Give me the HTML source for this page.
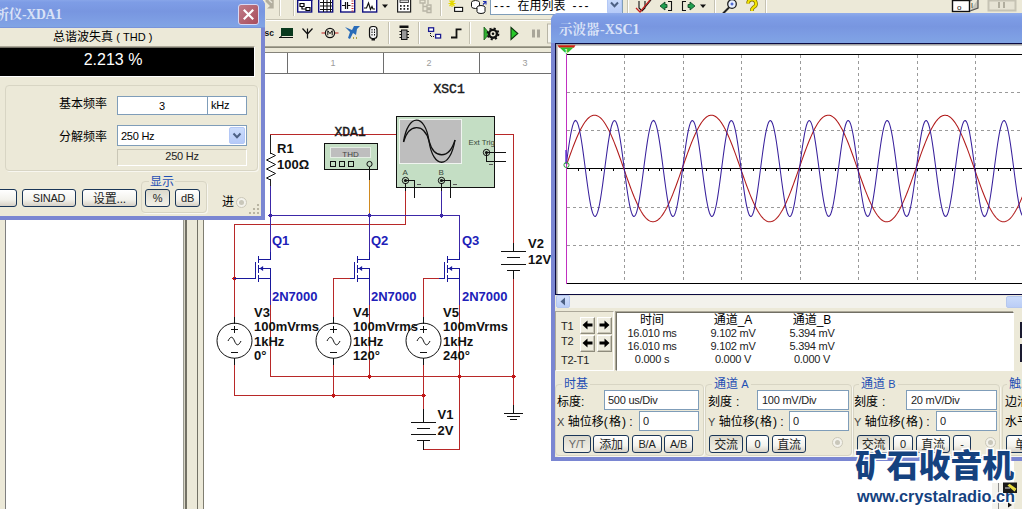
<!DOCTYPE html><html><head><meta charset="utf-8"><title>Multisim</title><style>*{box-sizing:border-box;margin:0;padding:0}
html,body{width:1022px;height:509px;overflow:hidden;background:#fff}
body{position:relative;font-family:"Liberation Sans","Noto Sans CJK SC",sans-serif;font-size:11px;color:#000}
.a{position:absolute}
.t{position:absolute;white-space:nowrap;line-height:1;letter-spacing:-0.25px}
.cj{font-family:"Liberation Sans","Noto Sans CJK SC",sans-serif;font-size:12px;letter-spacing:0}
.beige{background:#ECE9D8}
.btn{position:absolute;letter-spacing:-0.25px;color:#222;border:1px solid #1A3658;border-radius:3px;background:linear-gradient(#fff,#F3F2EC 60%,#D6D0C5);text-align:center;white-space:nowrap;overflow:hidden}
.btn.on{background:linear-gradient(#DCD9CC,#E8E6DC 50%,#F1EFE6)}
.inp{position:absolute;border:1px solid #7F9DB9;background:#fff;white-space:nowrap;overflow:hidden}
.grp{position:absolute;border:1px solid #D8D5C4;border-radius:4px;box-shadow:1px 1px 0 #F8F7F0}
.blue{color:#1F4FB4}
svg{position:absolute;overflow:visible}
</style></head><body>
<!-- sec_bg -->
<div class="a beige" style="left:0;top:0;width:1022px;height:53px"></div>
<div class="a" style="left:266px;top:19px;width:756px;height:1px;background:#C5C2B2"></div>
<div class="a" style="left:266px;top:20px;width:756px;height:1px;background:#fff"></div>
<div class="a" style="left:258px;top:46px;width:300px;height:1px;background:#A7A494"></div>
<div class="a" style="left:258px;top:47px;width:300px;height:1px;background:#8A8878"></div>
<div class="a" style="left:258px;top:52px;width:300px;height:1px;background:#85837A"></div>
<div class="a beige" style="left:0;top:200px;width:5px;height:309px"></div>
<div class="a" style="left:5px;top:200px;width:1px;height:309px;background:#7F7F7F"></div>
<div class="a beige" style="left:183px;top:200px;width:21px;height:309px"></div>
<div class="a" style="left:183px;top:200px;width:1px;height:309px;background:#9A9A90"></div>
<div class="a" style="left:184px;top:200px;width:1px;height:309px;background:#D8D5C5"></div>
<div class="a" style="left:185px;top:200px;width:2px;height:309px;background:#737165"></div>
<div class="a" style="left:197px;top:200px;width:1px;height:309px;background:#737165"></div>
<div class="a" style="left:203px;top:200px;width:1px;height:309px;background:#7F7D70"></div>
<div class="a" style="left:265px;top:73px;width:290px;height:1px;background:#6e6e6e"></div>
<div class="a" style="left:287px;top:53px;width:1px;height:20px;background:#6e6e6e"></div>
<div class="a" style="left:383px;top:53px;width:1px;height:20px;background:#6e6e6e"></div>
<div class="a" style="left:479px;top:53px;width:1px;height:20px;background:#6e6e6e"></div>
<div class="t" style="left:328px;top:58.7px;width:10px;text-align:center;font-size:9px;color:#9c9c9c">1</div>
<div class="t" style="left:424px;top:58.7px;width:10px;text-align:center;font-size:9px;color:#9c9c9c">2</div>
<div class="t" style="left:520px;top:58.7px;width:10px;text-align:center;font-size:9px;color:#9c9c9c">3</div>
<!-- sec_toolbar -->
<svg width="1022" height="53" viewBox="0 0 1022 53" style="left:0;top:0">
<rect x="279" y="0" width="1" height="16" fill="#C5C2B2"/><rect x="280" y="0" width="1" height="16" fill="#fff"/>
<rect x="293" y="0" width="1" height="16" fill="#C5C2B2"/><rect x="294" y="0" width="1" height="16" fill="#fff"/>
<rect x="440" y="0" width="1" height="16" fill="#C5C2B2"/><rect x="441" y="0" width="1" height="16" fill="#fff"/>
<rect x="627" y="0" width="1" height="16" fill="#C5C2B2"/><rect x="628" y="0" width="1" height="16" fill="#fff"/>
<rect x="714" y="0" width="1" height="16" fill="#C5C2B2"/><rect x="715" y="0" width="1" height="16" fill="#fff"/>
<rect x="765" y="0" width="1" height="16" fill="#C5C2B2"/><rect x="766" y="0" width="1" height="16" fill="#fff"/>
<path d="M265.5 0h8.2v8.4h-6.7l3 -2.4l-4.5 -4.5z" fill="#B2AE9E"/><path d="M269 0l3 2.800" stroke="#E8E6DA" stroke-width="1.4"/>
<rect x="297.7" y="-2" width="14" height="14" fill="#fff" stroke="#101080" stroke-width="1.4"/>
<rect x="318.7" y="-2" width="14" height="14" fill="#fff" stroke="#101080" stroke-width="1.4"/>
<rect x="340.7" y="-2" width="14" height="14" fill="#fff" stroke="#101080" stroke-width="1.4"/>
<rect x="362.7" y="-2" width="14" height="14" fill="#fff" stroke="#101080" stroke-width="1.4"/>
<rect x="297" y="-2" width="15.4" height="3" fill="#101080"/>
<path d="M300 3.5h4v3h-4zM306 7.5h4v3h-4zM302 6.5v2.5h4" fill="none" stroke="#000" stroke-width="1.2"/>
<path d="M320 2.5h12M320 6h12M320 9.5h12M323.5 0v12M327 0v12M330.5 0v12" stroke="#111" stroke-width="1"/>
<path d="M342 5.5h3M345.5 2v7M347.5 2v7M347.5 5.5h3" stroke="#111" stroke-width="1.2" fill="none"/><path d="M351.5 1h2M351.5 3.5h2M351.5 6h2M351.5 8.5h2M351.5 11h2" stroke="#C03030" stroke-width="1"/>
<path d="M364 8h2.5l2 -5l2 6.5l1.5 -3l1 2.5h2" stroke="#111" stroke-width="1.2" fill="none"/>
<path d="M382 4.5h6l-3 3.5z" fill="#111"/>
<rect x="397.6" y="-2" width="13" height="14" fill="#fff" stroke="#222" stroke-width="1.2"/><rect x="400" y="0" width="8.5" height="2.5" fill="#ddd" stroke="#222" stroke-width=".8"/>
<rect x="400" y="5" width="1.6" height="1.8" fill="#222"/>
<rect x="403.5" y="5" width="1.6" height="1.8" fill="#222"/>
<rect x="407" y="5" width="1.6" height="1.8" fill="#222"/>
<rect x="400" y="8" width="1.6" height="1.8" fill="#222"/>
<rect x="403.5" y="8" width="1.6" height="1.8" fill="#222"/>
<rect x="407" y="8" width="1.6" height="1.8" fill="#222"/>
<path d="M420 0h5v3h-5zM428 0v4M423 3v8h4M423 6.5h4M427 5h4v3h-4zM427 9.5h4v3h-4z" fill="none" stroke="#B8B5A6" stroke-width="1.3"/>
<path d="M452 -1v8M448.5 3.5h7M449.5 0.5l5 5.5M454.5 0.5l-5 5.5" stroke="#E4D800" stroke-width="1.2"/><rect x="454.6" y="7.4" width="8" height="4" fill="#fff" stroke="#111" stroke-width="1.1"/>
<ellipse cx="475.5" cy="2.5" rx="4" ry="2" fill="#fff" stroke="#111"/><path d="M471.5 2.5v4a4 2 0 0 0 8 0v-4" fill="#fff" stroke="#111"/>
<ellipse cx="481" cy="7.5" rx="4" ry="2" fill="#fff" stroke="#111"/><path d="M477 7.5v4a4 2 0 0 0 8 0v-4" fill="#fff" stroke="#111"/><path d="M483 1.5h3v3M486 1.5l-3 3" stroke="#2030B0" stroke-width="1.1" fill="none"/>
<path d="M639 1v7l3 3l3 -3v-7M642 11l9 -11" fill="none" stroke="#111" stroke-width="1.1"/><path d="M636 8l4 4l10 -12" fill="none" stroke="#C02020" stroke-width="1.3"/>
<path d="M660 6l5 -4v2.5h2v3h-2v2.5z" fill="#20A050" stroke="#0A4020" stroke-width=".8"/><path d="M668 1.5h3.5v9h-3.5" fill="none" stroke="#111" stroke-width="1.1"/>
<path d="M695 6l-5 -4v2.5h-2v3h2v2.5z" fill="#20A050" stroke="#0A4020" stroke-width=".8"/><path d="M686 1.5h-3.5v9h3.5" fill="none" stroke="#111" stroke-width="1.1"/>
<path d="M700 4.5h6l-3 3.5z" fill="#111"/>
<circle cx="732" cy="4" r="4.3" fill="#E8F0FF" stroke="#222" stroke-width="1.3"/><path d="M729 7.5l-6 6" stroke="#222" stroke-width="2"/><path d="M730.5 4h3M732 2.5v3" stroke="#2040C0" stroke-width="1"/>
<path d="M748 3.5a4 4 0 1 1 5.5 3.8l-1.5 1.8v2" fill="none" stroke="#8A7A00" stroke-width="3.6"/><path d="M748 3.5a4 4 0 1 1 5.5 3.8l-1.5 1.8v2" fill="none" stroke="#F4E400" stroke-width="2"/>
<rect x="952.5" y="0.5" width="17" height="11" fill="#fff" stroke="#111" stroke-width="1.4"/><text x="957" y="9.5" font-size="8" font-family="Liberation Sans, sans-serif" fill="#111">o</text><path d="M970 11l8 -3v-9M970 1l3 -2" stroke="#555" stroke-width="1.2" fill="#C8C5B8"/><text x="971" y="8" font-size="7" font-family="Liberation Sans, sans-serif" fill="#111">I</text>
<rect x="988.5" y="0.5" width="27" height="10" fill="#E6E3D4" stroke="#C6C3B4" stroke-width="2"/><rect x="998" y="2" width="2" height="6" fill="#B0AD9E"/><rect x="1003" y="2" width="2" height="6" fill="#B0AD9E"/>
<rect x="388" y="22" width="1" height="22" fill="#C5C2B2"/><rect x="389" y="22" width="1" height="22" fill="#fff"/>
<rect x="418" y="22" width="1" height="22" fill="#C5C2B2"/><rect x="419" y="22" width="1" height="22" fill="#fff"/>
<rect x="469" y="22" width="1" height="22" fill="#C5C2B2"/><rect x="470" y="22" width="1" height="22" fill="#fff"/>
<text x="264.5" y="35.5" font-size="8.5" font-weight="bold" font-family="Liberation Sans, sans-serif" fill="#111">sc</text>
<rect x="281" y="28" width="12" height="8" fill="#0A3A1E"/><path d="M279 37.5h14M281 36v1.5" stroke="#111" stroke-width="1.2"/>
<path d="M307.5 28.5v10M302.5 28.5l5 5.5l5 -5.5" fill="none" stroke="#111" stroke-width="1.2"/>
<path d="M321.5 33h4M334.5 33h4" stroke="#C02020" stroke-width="1.2"/><circle cx="330" cy="33" r="4.6" fill="none" stroke="#111" stroke-width="1.2"/><path d="M327.8 35.3v-4.6l2.2 3l2.2 -3v4.6" fill="none" stroke="#111" stroke-width="1"/>
<path d="M345 27l7 3l2 -4l6 0l-3 3l-1 6l-3 -2l-3 6l-2 -1l2 -6z" fill="#2A6CB8"/><path d="M353.5 37v2M356.5 37v2" stroke="#B0A040" stroke-width="1"/>
<rect x="369.5" y="26.5" width="7.5" height="12" rx="3" fill="#F4F4F4" stroke="#111" stroke-width="1.2"/><path d="M372 29v7M374.5 29v7" stroke="#111" stroke-width="1" stroke-dasharray="1.5 1"/><rect x="371.5" y="38.5" width="3.5" height="2" fill="#111"/>
<rect x="399.5" y="25.5" width="9" height="2.5" fill="#111"/><rect x="401.5" y="30" width="5.5" height="9.5" fill="#999" stroke="#111"/><path d="M399.5 31.5h2M399.5 34.5h2M399.5 37.5h2M407 31.5h2M407 34.5h2M407 37.5h2" stroke="#111" stroke-width="1.2"/>
<rect x="428.6" y="27.8" width="5" height="3.6" fill="#fff" stroke="#1A1A90" stroke-width="1.3"/><rect x="435.6" y="34.4" width="5" height="3.6" fill="#fff" stroke="#1A1A90" stroke-width="1.3"/><path d="M430.5 33v3.5h4" fill="none" stroke="#111" stroke-width="1" stroke-dasharray="1 1"/>
<path d="M451 37.5h5.5v-8.2h5" fill="none" stroke="#111" stroke-width="1.8"/>
<path d="M484 27l5.5 6.5l-5.5 6.5z" fill="#30B030" stroke="#1A5A1A" stroke-width=".8"/><circle cx="493" cy="33.8" r="3.9" fill="none" stroke="#111" stroke-width="2.4"/><circle cx="493" cy="33.8" r="5.5" fill="none" stroke="#111" stroke-width="1.8" stroke-dasharray="2.1 2.22"/><circle cx="493" cy="33.8" r="1.3" fill="#111"/>
<path d="M511 27.5l6.8 6l-6.8 6z" fill="#28C828" stroke="#103810" stroke-width="1.1"/>
<rect x="532" y="29.5" width="3" height="8" fill="#A9A699"/><rect x="537" y="29.5" width="3" height="8" fill="#A9A699"/>
<rect x="547.5" y="24" width="8" height="19" fill="#F6F5EE" stroke="#B8B5A6"/>
</svg>
<div class="inp" style="left:490px;top:-4px;width:133px;height:19px"></div>
<div class="t cj" style="left:494px;top:-0.5px;font-size:12px;letter-spacing:2px">---</div>
<div class="t cj" style="left:517.5px;top:-0.5px;font-size:12px">在用列表</div>
<div class="t cj" style="left:572.5px;top:-0.5px;font-size:12px;letter-spacing:2px">---</div>
<div class="a" style="left:607px;top:-3px;width:15px;height:17px;border-radius:0 0 2px 2px;border:1px solid #B4C8F6;background:linear-gradient(#CBDCFC,#B6CAF8)"></div>
<svg width="15" height="14" style="left:607px;top:0"><path d="M4 2.5l3.5 3.8l3.5 -3.8" stroke="#4D6185" stroke-width="2" fill="none"/></svg>
<!-- sec_schem -->
<svg width="1022" height="509" viewBox="0 0 1022 509" style="left:0;top:0" shape-rendering="crispEdges">
<rect x="270" y="134" width="244" height="1" fill="#B82828"/>
<rect x="513" y="134" width="1" height="110" fill="#B82828"/>
<rect x="513" y="278" width="1" height="135" fill="#B82828"/>
<rect x="234" y="224" width="172" height="1" fill="#B82828"/>
<rect x="405" y="190" width="1" height="35" fill="#B82828"/>
<rect x="234" y="224" width="1" height="94" fill="#B82828"/>
<rect x="333" y="278" width="1" height="40" fill="#B82828"/>
<rect x="333" y="278" width="17" height="1" fill="#B82828"/>
<rect x="423" y="278" width="1" height="40" fill="#B82828"/>
<rect x="423" y="278" width="16" height="1" fill="#B82828"/>
<rect x="270" y="376" width="244" height="1" fill="#B82828"/>
<rect x="270" y="304" width="1" height="73" fill="#B82828"/>
<rect x="369" y="304" width="1" height="73" fill="#B82828"/>
<rect x="459" y="304" width="1" height="146" fill="#B82828"/>
<rect x="234" y="395" width="190" height="1" fill="#B82828"/>
<rect x="234" y="364" width="1" height="32" fill="#B82828"/>
<rect x="333" y="364" width="1" height="32" fill="#B82828"/>
<rect x="423" y="364" width="1" height="46" fill="#B82828"/>
<rect x="423" y="449" width="37" height="1" fill="#B82828"/>
<rect x="270" y="185" width="1" height="68" fill="#3C28A8"/>
<rect x="270" y="215" width="190" height="1" fill="#3C28A8"/>
<rect x="459" y="215" width="1" height="38" fill="#3C28A8"/>
<rect x="369" y="215" width="1" height="38" fill="#3C28A8"/>
<rect x="441" y="190" width="1" height="26" fill="#3C28A8"/>
<rect x="369" y="179" width="1" height="36" fill="#D08A20"/>
<path d="M267.9 215.5l2.6 -2.6l2.6 2.6l-2.6 2.6z" fill="#3C28A8"/>
<path d="M366.9 215.5l2.6 -2.6l2.6 2.6l-2.6 2.6z" fill="#3C28A8"/>
<path d="M438.9 215.5l2.6 -2.6l2.6 2.6l-2.6 2.6z" fill="#3C28A8"/>
<path d="M231.9 278.5l2.6 -2.6l2.6 2.6l-2.6 2.6z" fill="#C01818"/>
<path d="M366.9 376.5l2.6 -2.6l2.6 2.6l-2.6 2.6z" fill="#C01818"/>
<path d="M456.9 376.5l2.6 -2.6l2.6 2.6l-2.6 2.6z" fill="#C01818"/>
<path d="M510.9 376.5l2.6 -2.6l2.6 2.6l-2.6 2.6z" fill="#C01818"/>
<path d="M330.9 395.5l2.6 -2.6l2.6 2.6l-2.6 2.6z" fill="#C01818"/>
<path d="M420.9 395.5l2.6 -2.6l2.6 2.6l-2.6 2.6z" fill="#C01818"/>
<rect x="270" y="135" width="1" height="19" fill="#222"/>
<polyline points="270.5,153 275.5,155.5 266.5,160 275.5,164.5 266.5,169 275.5,173.5 266.5,178 270.5,180" fill="none" stroke="#111" stroke-width="1" shape-rendering="auto"/>
<rect x="270" y="179" width="1" height="7" fill="#222"/>
<text x="277" y="153" fill="#111" font-size="13" font-family="Liberation Sans, sans-serif" font-weight="bold" >R1</text>
<text x="277" y="169" fill="#111" font-size="13" font-family="Liberation Sans, sans-serif" font-weight="bold" >100Ω</text>
<rect x="270" y="252" width="1" height="8" fill="#18189C"/>
<rect x="258" y="259" width="13" height="1" fill="#18189C"/>
<rect x="258" y="256" width="1" height="7" fill="#18189C"/>
<rect x="258" y="265" width="1" height="8" fill="#18189C"/>
<rect x="258" y="275" width="1" height="7" fill="#18189C"/>
<rect x="255" y="262" width="1" height="17" fill="#18189C"/>
<rect x="234" y="278" width="22" height="1" fill="#18189C"/>
<rect x="258" y="268" width="13" height="1" fill="#18189C"/>
<rect x="270" y="268" width="1" height="23" fill="#18189C"/>
<rect x="270" y="290" width="1" height="15" fill="#3C28A8"/>
<rect x="258" y="278" width="13" height="1" fill="#18189C"/>
<path d="M259.5 268.5l3.6 -2.6v5.2z" fill="#18189C" shape-rendering="auto"/>
<rect x="369" y="252" width="1" height="8" fill="#18189C"/>
<rect x="357" y="259" width="13" height="1" fill="#18189C"/>
<rect x="357" y="256" width="1" height="7" fill="#18189C"/>
<rect x="357" y="265" width="1" height="8" fill="#18189C"/>
<rect x="357" y="275" width="1" height="7" fill="#18189C"/>
<rect x="354" y="262" width="1" height="17" fill="#18189C"/>
<rect x="350" y="278" width="5" height="1" fill="#18189C"/>
<rect x="357" y="268" width="13" height="1" fill="#18189C"/>
<rect x="369" y="268" width="1" height="23" fill="#18189C"/>
<rect x="369" y="290" width="1" height="15" fill="#3C28A8"/>
<rect x="357" y="278" width="13" height="1" fill="#18189C"/>
<path d="M358.5 268.5l3.6 -2.6v5.2z" fill="#18189C" shape-rendering="auto"/>
<rect x="459" y="252" width="1" height="8" fill="#18189C"/>
<rect x="447" y="259" width="13" height="1" fill="#18189C"/>
<rect x="447" y="256" width="1" height="7" fill="#18189C"/>
<rect x="447" y="265" width="1" height="8" fill="#18189C"/>
<rect x="447" y="275" width="1" height="7" fill="#18189C"/>
<rect x="444" y="262" width="1" height="17" fill="#18189C"/>
<rect x="439" y="278" width="6" height="1" fill="#18189C"/>
<rect x="447" y="268" width="13" height="1" fill="#18189C"/>
<rect x="459" y="268" width="1" height="23" fill="#18189C"/>
<rect x="459" y="290" width="1" height="15" fill="#3C28A8"/>
<rect x="447" y="278" width="13" height="1" fill="#18189C"/>
<path d="M448.5 268.5l3.6 -2.6v5.2z" fill="#18189C" shape-rendering="auto"/>
<text x="272" y="245.3" fill="#2020B8" font-size="13" font-family="Liberation Sans, sans-serif" font-weight="bold" >Q1</text>
<text x="272" y="301" fill="#2020B8" font-size="13" font-family="Liberation Sans, sans-serif" font-weight="bold" >2N7000</text>
<text x="371" y="245.3" fill="#2020B8" font-size="13" font-family="Liberation Sans, sans-serif" font-weight="bold" >Q2</text>
<text x="371" y="301" fill="#2020B8" font-size="13" font-family="Liberation Sans, sans-serif" font-weight="bold" >2N7000</text>
<text x="462" y="245.3" fill="#2020B8" font-size="13" font-family="Liberation Sans, sans-serif" font-weight="bold" >Q3</text>
<text x="462" y="301" fill="#2020B8" font-size="13" font-family="Liberation Sans, sans-serif" font-weight="bold" >2N7000</text>
<circle cx="234.5" cy="340.7" r="17.5" fill="none" stroke="#111" stroke-width="1" shape-rendering="auto"/>
<rect x="234" y="317" width="1" height="7" fill="#111"/>
<rect x="234" y="358" width="1" height="7" fill="#111"/>
<rect x="231" y="329" width="7" height="1" fill="#111"/>
<rect x="234" y="326" width="1" height="7" fill="#111"/>
<rect x="231" y="352" width="7" height="1" fill="#111"/>
<path d="M228 341c2.5 -5 4.5 -5 6.5 0s4 5 6.5 0" fill="none" stroke="#111" stroke-width="1" shape-rendering="auto"/>
<text x="254" y="317" fill="#111" font-size="13" font-family="Liberation Sans, sans-serif" font-weight="bold" >V3</text>
<text x="254" y="331" fill="#111" font-size="13" font-family="Liberation Sans, sans-serif" font-weight="bold" >100mVrms</text>
<text x="254" y="345.5" fill="#111" font-size="13" font-family="Liberation Sans, sans-serif" font-weight="bold" >1kHz</text>
<text x="254" y="360" fill="#111" font-size="13" font-family="Liberation Sans, sans-serif" font-weight="bold" >0°</text>
<circle cx="333.5" cy="340.7" r="17.5" fill="none" stroke="#111" stroke-width="1" shape-rendering="auto"/>
<rect x="333" y="317" width="1" height="7" fill="#111"/>
<rect x="333" y="358" width="1" height="7" fill="#111"/>
<rect x="330" y="329" width="7" height="1" fill="#111"/>
<rect x="333" y="326" width="1" height="7" fill="#111"/>
<rect x="330" y="352" width="7" height="1" fill="#111"/>
<path d="M327 341c2.5 -5 4.5 -5 6.5 0s4 5 6.5 0" fill="none" stroke="#111" stroke-width="1" shape-rendering="auto"/>
<text x="353" y="317" fill="#111" font-size="13" font-family="Liberation Sans, sans-serif" font-weight="bold" >V4</text>
<text x="353" y="331" fill="#111" font-size="13" font-family="Liberation Sans, sans-serif" font-weight="bold" >100mVrms</text>
<text x="353" y="345.5" fill="#111" font-size="13" font-family="Liberation Sans, sans-serif" font-weight="bold" >1kHz</text>
<text x="353" y="360" fill="#111" font-size="13" font-family="Liberation Sans, sans-serif" font-weight="bold" >120°</text>
<circle cx="423.5" cy="340.7" r="17.5" fill="none" stroke="#111" stroke-width="1" shape-rendering="auto"/>
<rect x="423" y="317" width="1" height="7" fill="#111"/>
<rect x="423" y="358" width="1" height="7" fill="#111"/>
<rect x="420" y="329" width="7" height="1" fill="#111"/>
<rect x="423" y="326" width="1" height="7" fill="#111"/>
<rect x="420" y="352" width="7" height="1" fill="#111"/>
<path d="M417 341c2.5 -5 4.5 -5 6.5 0s4 5 6.5 0" fill="none" stroke="#111" stroke-width="1" shape-rendering="auto"/>
<text x="443" y="317" fill="#111" font-size="13" font-family="Liberation Sans, sans-serif" font-weight="bold" >V5</text>
<text x="443" y="331" fill="#111" font-size="13" font-family="Liberation Sans, sans-serif" font-weight="bold" >100mVrms</text>
<text x="443" y="345.5" fill="#111" font-size="13" font-family="Liberation Sans, sans-serif" font-weight="bold" >1kHz</text>
<text x="443" y="360" fill="#111" font-size="13" font-family="Liberation Sans, sans-serif" font-weight="bold" >240°</text>
<rect x="513" y="243" width="1" height="9" fill="#111"/>
<rect x="501" y="251" width="25" height="1" fill="#111"/>
<rect x="507" y="257" width="13" height="1" fill="#111"/>
<rect x="501" y="264" width="25" height="1" fill="#111"/>
<rect x="507" y="270" width="13" height="1" fill="#111"/>
<rect x="513" y="270" width="1" height="9" fill="#111"/>
<text x="528" y="248" fill="#111" font-size="13" font-family="Liberation Sans, sans-serif" font-weight="bold" >V2</text>
<text x="528" y="264.3" fill="#111" font-size="13" font-family="Liberation Sans, sans-serif" font-weight="bold" >12V</text>
<rect x="423" y="409" width="1" height="14" fill="#111"/>
<rect x="411" y="422" width="25" height="1" fill="#111"/>
<rect x="417" y="428" width="13" height="1" fill="#111"/>
<rect x="411" y="434" width="25" height="1" fill="#111"/>
<rect x="417" y="440" width="13" height="1" fill="#111"/>
<rect x="423" y="440" width="1" height="10" fill="#111"/>
<text x="437.5" y="419.2" fill="#111" font-size="13" font-family="Liberation Sans, sans-serif" font-weight="bold" >V1</text>
<text x="437.5" y="435" fill="#111" font-size="13" font-family="Liberation Sans, sans-serif" font-weight="bold" >2V</text>
<rect x="513" y="405" width="1" height="9" fill="#111"/>
<rect x="504" y="413" width="19" height="1" fill="#111"/>
<rect x="507" y="416" width="13" height="1" fill="#111"/>
<rect x="510" y="419" width="7" height="1" fill="#111"/>
<text x="334.5" y="135.6" fill="#1a1a1a" font-size="13" font-family="Liberation Mono, sans-serif" font-weight="normal" stroke="#1a1a1a" stroke-width="0.45">XDA1</text>
<rect x="324.5" y="143.5" width="53" height="26" fill="#C4DEC4" stroke="#111"/>
<rect x="330.5" y="147.5" width="40" height="10" fill="#BEBEBE" stroke="#E4EEE4"/>
<text x="350.5" y="156.6" fill="#444" font-size="8" font-family="Liberation Sans, sans-serif" font-weight="normal" text-anchor="middle">THD</text>
<rect x="330.5" y="161.5" width="5" height="5" fill="#C4DEC4" stroke="#111"/>
<rect x="339.5" y="161.5" width="5" height="5" fill="#C4DEC4" stroke="#111"/>
<rect x="348.5" y="161.5" width="5" height="5" fill="#C4DEC4" stroke="#111"/>
<circle cx="369.5" cy="164" r="2.6" fill="#C4DEC4" stroke="#111" shape-rendering="auto"/>
<rect x="369" y="167" width="1" height="13" fill="#111"/>
<text x="433.5" y="93.4" fill="#1a1a1a" font-size="13" font-family="Liberation Mono, sans-serif" font-weight="normal" stroke="#1a1a1a" stroke-width="0.45">XSC1</text>
<rect x="396.5" y="116.5" width="98" height="71" fill="#C4DEC4" stroke="#111"/>
<rect x="399.5" y="119.5" width="62" height="44" fill="#BEBEBE" stroke="#F0F4F0"/>
<path d="M403.5 142C408 113 425 113 429 141S450 170 455 140" fill="none" stroke="#111" stroke-width="1.3" shape-rendering="auto"/>
<path d="M403.5 142C409 123 424 123 429 141S449 160 455 140" fill="none" stroke="#111" stroke-width="1.3" shape-rendering="auto"/>
<text x="468.5" y="144.5" fill="#3a4a3a" font-size="7.8" font-family="Liberation Sans, sans-serif" font-weight="normal" >Ext Trig</text>
<text x="402.5" y="175" fill="#3a4a3a" font-size="8" font-family="Liberation Sans, sans-serif" font-weight="normal" >A</text>
<text x="438.5" y="175" fill="#3a4a3a" font-size="8" font-family="Liberation Sans, sans-serif" font-weight="normal" >B</text>
<circle cx="405.5" cy="180.5" r="3.2" fill="#C4DEC4" stroke="#111" shape-rendering="auto"/>
<circle cx="405.5" cy="180.5" r="1.6" fill="#111" shape-rendering="auto"/>
<circle cx="441.5" cy="180.5" r="3.2" fill="#C4DEC4" stroke="#111" shape-rendering="auto"/>
<circle cx="441.5" cy="180.5" r="1.6" fill="#111" shape-rendering="auto"/>
<circle cx="486.5" cy="152.5" r="3.2" fill="#C4DEC4" stroke="#111" shape-rendering="auto"/>
<circle cx="486.5" cy="152.5" r="1.6" fill="#111" shape-rendering="auto"/>
<rect x="405" y="180" width="10" height="1" fill="#111"/>
<rect x="414" y="180" width="1" height="18" fill="#111"/>
<rect x="405" y="183" width="1" height="8" fill="#111"/>
<rect x="417" y="184" width="4" height="1" fill="#555"/>
<rect x="441" y="180" width="10" height="1" fill="#111"/>
<rect x="450" y="180" width="1" height="18" fill="#111"/>
<rect x="441" y="183" width="1" height="8" fill="#111"/>
<rect x="453" y="184" width="4" height="1" fill="#555"/>
<rect x="486" y="152" width="20" height="1" fill="#111"/>
<rect x="486" y="152" width="1" height="10" fill="#111"/>
<rect x="486" y="161" width="20" height="1" fill="#111"/>
<rect x="489" y="164" width="4" height="1" fill="#555"/>
</svg>
<!-- sec_xda -->
<div class="a" style="left:-10px;top:-2px;width:275px;height:222px;background:#7A86D2;border-radius:0 8px 0 0"></div>
<div class="a beige" style="left:-10px;top:27px;width:271px;height:189px"></div>
<div class="a" style="left:-10px;top:-2px;width:275px;height:30px;border-radius:0 8px 0 0;background:linear-gradient(#90ACEB 0,#7E9DE6 14%,#7896E0 45%,#7E9FE4 80%,#80A4E4 96%,#7388D4 100%)"></div>
<div class="t" style="left:-4.5px;top:7.3px;font-size:13.5px;font-weight:bold;color:#D9E2F7;font-family:'Liberation Serif','Noto Serif CJK SC',serif">析仪<span style="display:inline-block;font-size:15.5px;line-height:13.5px;transform:scaleX(.88);transform-origin:0 50%">-XDA1</span></div>
<div class="a" style="left:238px;top:4px;width:21px;height:21px;border:1px solid #D8D8F4;border-radius:3px;background:linear-gradient(135deg,#C07C88,#A84C5C)"></div>
<svg width="21" height="21" style="left:238px;top:4px"><path d="M5.8 5.8l9.4 9.4M15.2 5.8l-9.4 9.4" stroke="#fff" stroke-width="2.2" fill="none"/></svg>
<div class="t cj" style="left:53px;top:31px">总谐波失真 <span style="font-size:11px">( THD )</span></div>
<div class="a" style="left:-10px;top:46px;width:265px;height:31px;background:#000;border:1px solid #fff;border-top-color:#ACA899;border-left-color:#ACA899;box-shadow:inset 1px 1px 0 #716F64"></div>
<div class="t" style="left:63px;top:52px;width:100px;text-align:center;font-size:16px;letter-spacing:0;color:#fff">2.213 %</div>
<div class="grp" style="left:5px;top:85px;width:253px;height:86px"></div>
<div class="t cj" style="left:59px;top:98px">基本频率</div>
<div class="inp" style="left:117px;top:96px;width:91px;height:19px"></div>
<div class="t" style="left:117px;top:101px;width:90px;text-align:center">3</div>
<div class="inp" style="left:207px;top:96px;width:40px;height:19px"></div>
<div class="t" style="left:211px;top:100px">kHz</div>
<div class="t cj" style="left:59px;top:130.5px">分解频率</div>
<div class="inp" style="left:117px;top:125px;width:130px;height:21px"></div>
<div class="t" style="left:121px;top:130.7px">250 Hz</div>
<div class="a" style="left:229px;top:127px;width:16px;height:17px;border-radius:2px;border:1px solid #B4C8F6;background:linear-gradient(#CBDCFC,#B6CAF8)"></div>
<svg width="16" height="17" style="left:229px;top:127px"><path d="M4.5 6.5l3.5 3.8l3.5 -3.8" stroke="#4D6185" stroke-width="2" fill="none"/></svg>
<div class="a" style="left:117px;top:149px;width:130px;height:17px;border:1px solid #fff;border-top-color:#C9C6B6;border-left-color:#C9C6B6"></div>
<div class="t" style="left:117px;top:151px;width:130px;text-align:center;color:#222">250 Hz</div>
<div class="btn" style="left:-10px;top:189px;width:27px;height:18px"></div>
<div class="btn" style="left:22px;top:189px;width:54px;height:18px;line-height:16px">SINAD</div>
<div class="btn cj" style="left:82px;top:189px;width:55px;height:18px;line-height:18px">设置...</div>
<div class="grp" style="left:141px;top:181px;width:66px;height:32px"></div>
<div class="t cj blue" style="left:149px;top:175.5px;background:#ECE9D8;padding:0 1px">显示</div>
<div class="btn on" style="left:145px;top:189px;width:25px;height:18px;line-height:16px">%</div>
<div class="btn" style="left:175px;top:189px;width:25px;height:18px;line-height:16px">dB</div>
<div class="t cj" style="left:222px;top:196px">进</div>
<div class="a" style="left:236px;top:197px;width:11px;height:11px;border-radius:50%;border:1px solid #CBC8B8;background:#F3F2EB"></div>
<div class="a" style="left:239px;top:200px;width:5px;height:5px;border-radius:50%;background:#C9C7BA"></div>
<div class="a" style="left:257px;top:212px;width:2px;height:2px;background:#B8B4A2"></div>
<div class="a" style="left:257px;top:208px;width:2px;height:2px;background:#B8B4A2"></div>
<div class="a" style="left:257px;top:204px;width:2px;height:2px;background:#B8B4A2"></div>
<div class="a" style="left:253px;top:212px;width:2px;height:2px;background:#B8B4A2"></div>
<div class="a" style="left:249px;top:212px;width:2px;height:2px;background:#B8B4A2"></div>
<div class="a" style="left:253px;top:208px;width:2px;height:2px;background:#B8B4A2"></div>
<!-- sec_osc -->
<div class="a" style="left:551px;top:13px;width:480px;height:448px;background:#7A86D2;border-radius:8px 0 0 0"></div>
<div class="a beige" style="left:555px;top:43px;width:480px;height:414px"></div>
<div class="a" style="left:551px;top:13px;width:480px;height:30px;border-radius:8px 0 0 0;background:linear-gradient(#90ACEB 0,#7E9DE6 14%,#7896E0 45%,#7E9FE4 80%,#80A4E4 100%)"></div>
<div class="t" style="left:559px;top:22.3px;font-size:13.5px;font-weight:bold;color:#D9E2F7;font-family:'Liberation Serif','Noto Serif CJK SC',serif;letter-spacing:0px">示波器<span style="display:inline-block;font-size:15.5px;line-height:13.5px;transform:scaleX(.9);transform-origin:0 50%">-XSC1</span></div>
<div class="a" style="left:555px;top:43px;width:480px;height:252px;background:#fff;border:1px solid #0A0A40;box-shadow:inset 1px 1px 0 #A0A0A0,inset 2px 2px 0 #c8c8c8"></div>
<svg width="1022" height="509" viewBox="0 0 1022 509" style="left:0;top:0">
<path d="M624.5 55V283M683.5 55V283M741.5 55V283M800.5 55V283M858.5 55V283M917.5 55V283M975.5 55V283M567 92.5H1022M567 130.5H1022M567 207.5H1022M567 245.5H1022" stroke="#9A9A9A" stroke-width="1" stroke-dasharray="3 3" fill="none" shape-rendering="crispEdges"/>
<path d="M566 54.5H1022M566 283.5H1022" stroke="#000" stroke-width="1" shape-rendering="crispEdges"/>
<path d="M566 168.5H1022" stroke="#000" stroke-width="1" shape-rendering="crispEdges"/>
<path d="M566.5 168.5v2.5M578.5 168.5v2.5M589.5 168.5v2.5M601.5 168.5v2.5M613.5 168.5v2.5M624.5 168.5v2.5M636.5 168.5v2.5M648.5 168.5v2.5M659.5 168.5v2.5M671.5 168.5v2.5M683.5 168.5v2.5M695.5 168.5v2.5M706.5 168.5v2.5M718.5 168.5v2.5M730.5 168.5v2.5M741.5 168.5v2.5M753.5 168.5v2.5M765.5 168.5v2.5M776.5 168.5v2.5M788.5 168.5v2.5M800.5 168.5v2.5M811.5 168.5v2.5M823.5 168.5v2.5M835.5 168.5v2.5M846.5 168.5v2.5M858.5 168.5v2.5M870.5 168.5v2.5M882.5 168.5v2.5M893.5 168.5v2.5M905.5 168.5v2.5M917.5 168.5v2.5M928.5 168.5v2.5M940.5 168.5v2.5M952.5 168.5v2.5M963.5 168.5v2.5M975.5 168.5v2.5M987.5 168.5v2.5M998.5 168.5v2.5M1010.5 168.5v2.5M1022.5 168.5v2.5" stroke="#000" stroke-width="1" shape-rendering="crispEdges"/>
<polyline points="566.5,165.1 567.5,162.2 568.5,159.4 569.5,156.6 570.5,153.8 571.5,151.1 572.5,148.4 573.5,145.8 574.5,143.2 575.5,140.7 576.5,138.3 577.5,136.0 578.5,133.8 579.5,131.6 580.5,129.6 581.5,127.7 582.5,125.9 583.5,124.3 584.5,122.7 585.5,121.3 586.5,120.1 587.5,118.9 588.5,118.0 589.5,117.1 590.5,116.4 591.5,115.9 592.5,115.5 593.5,115.3 594.5,115.2 595.5,115.3 596.5,115.5 597.5,115.9 598.5,116.4 599.5,117.1 600.5,117.9 601.5,118.9 602.5,120.0 603.5,121.3 604.5,122.7 605.5,124.2 606.5,125.9 607.5,127.7 608.5,129.6 609.5,131.6 610.5,133.7 611.5,135.9 612.5,138.2 613.5,140.6 614.5,143.1 615.5,145.7 616.5,148.3 617.5,151.0 618.5,153.7 619.5,156.5 620.5,159.3 621.5,162.1 622.5,165.0 623.5,167.8 624.5,170.7 625.5,173.6 626.5,176.4 627.5,179.2 628.5,182.0 629.5,184.8 630.5,187.5 631.5,190.1 632.5,192.7 633.5,195.2 634.5,197.7 635.5,200.0 636.5,202.3 637.5,204.5 638.5,206.5 639.5,208.5 640.5,210.3 641.5,212.0 642.5,213.6 643.5,215.1 644.5,216.4 645.5,217.6 646.5,218.6 647.5,219.5 648.5,220.3 649.5,220.9 650.5,221.3 651.5,221.6 652.5,221.8 653.5,221.8 654.5,221.6 655.5,221.3 656.5,220.8 657.5,220.2 658.5,219.4 659.5,218.5 660.5,217.5 661.5,216.3 662.5,214.9 663.5,213.4 664.5,211.8 665.5,210.1 666.5,208.3 667.5,206.3 668.5,204.2 669.5,202.0 670.5,199.8 671.5,197.4 672.5,195.0 673.5,192.4 674.5,189.8 675.5,187.2 676.5,184.5 677.5,181.7 678.5,178.9 679.5,176.1 680.5,173.3 681.5,170.4 682.5,167.5 683.5,164.7 684.5,161.8 685.5,159.0 686.5,156.2 687.5,153.4 688.5,150.7 689.5,148.0 690.5,145.4 691.5,142.8 692.5,140.4 693.5,138.0 694.5,135.7 695.5,133.5 696.5,131.4 697.5,129.4 698.5,127.5 699.5,125.7 700.5,124.1 701.5,122.5 702.5,121.2 703.5,119.9 704.5,118.8 705.5,117.8 706.5,117.0 707.5,116.4 708.5,115.8 709.5,115.5 710.5,115.3 711.5,115.2 712.5,115.3 713.5,115.5 714.5,116.0 715.5,116.5 716.5,117.2 717.5,118.1 718.5,119.1 719.5,120.2 720.5,121.5 721.5,122.9 722.5,124.5 723.5,126.1 724.5,127.9 725.5,129.8 726.5,131.9 727.5,134.0 728.5,136.2 729.5,138.6 730.5,141.0 731.5,143.5 732.5,146.0 733.5,148.7 734.5,151.4 735.5,154.1 736.5,156.9 737.5,159.7 738.5,162.5 739.5,165.4 740.5,168.2 741.5,171.1 742.5,174.0 743.5,176.8 744.5,179.6 745.5,182.4 746.5,185.2 747.5,187.9 748.5,190.5 749.5,193.1 750.5,195.6 751.5,198.0 752.5,200.3 753.5,202.6 754.5,204.7 755.5,206.8 756.5,208.7 757.5,210.6 758.5,212.3 759.5,213.8 760.5,215.3 761.5,216.6 762.5,217.7 763.5,218.8 764.5,219.6 765.5,220.4 766.5,221.0 767.5,221.4 768.5,221.7 769.5,221.8 770.5,221.8 771.5,221.6 772.5,221.2 773.5,220.8 774.5,220.1 775.5,219.3 776.5,218.4 777.5,217.3 778.5,216.1 779.5,214.7 780.5,213.2 781.5,211.6 782.5,209.9 783.5,208.0 784.5,206.0 785.5,203.9 786.5,201.7 787.5,199.4 788.5,197.1 789.5,194.6 790.5,192.1 791.5,189.5 792.5,186.8 793.5,184.1 794.5,181.3 795.5,178.5 796.5,175.7 797.5,172.9 798.5,170.0 799.5,167.1 800.5,164.3 801.5,161.4 802.5,158.6 803.5,155.8 804.5,153.0 805.5,150.3 806.5,147.6 807.5,145.0 808.5,142.5 809.5,140.0 810.5,137.7 811.5,135.4 812.5,133.2 813.5,131.1 814.5,129.1 815.5,127.2 816.5,125.5 817.5,123.8 818.5,122.3 819.5,121.0 820.5,119.7 821.5,118.7 822.5,117.7 823.5,116.9 824.5,116.3 825.5,115.8 826.5,115.4 827.5,115.2 828.5,115.2 829.5,115.3 830.5,115.6 831.5,116.0 832.5,116.6 833.5,117.3 834.5,118.2 835.5,119.2 836.5,120.4 837.5,121.7 838.5,123.1 839.5,124.7 840.5,126.4 841.5,128.2 842.5,130.1 843.5,132.2 844.5,134.3 845.5,136.6 846.5,138.9 847.5,141.3 848.5,143.8 849.5,146.4 850.5,149.0 851.5,151.7 852.5,154.5 853.5,157.3 854.5,160.1 855.5,162.9 856.5,165.8 857.5,168.6 858.5,171.5 859.5,174.4 860.5,177.2 861.5,180.0 862.5,182.8 863.5,185.5 864.5,188.2 865.5,190.9 866.5,193.4 867.5,195.9 868.5,198.3 869.5,200.7 870.5,202.9 871.5,205.0 872.5,207.1 873.5,209.0 874.5,210.8 875.5,212.5 876.5,214.0 877.5,215.5 878.5,216.7 879.5,217.9 880.5,218.9 881.5,219.8 882.5,220.5 883.5,221.0 884.5,221.4 885.5,221.7 886.5,221.8 887.5,221.7 888.5,221.5 889.5,221.2 890.5,220.7 891.5,220.0 892.5,219.2 893.5,218.2 894.5,217.1 895.5,215.9 896.5,214.5 897.5,213.0 898.5,211.4 899.5,209.6 900.5,207.7 901.5,205.7 902.5,203.6 903.5,201.4 904.5,199.1 905.5,196.7 906.5,194.3 907.5,191.7 908.5,189.1 909.5,186.4 910.5,183.7 911.5,180.9 912.5,178.1 913.5,175.3 914.5,172.5 915.5,169.6 916.5,166.7 917.5,163.9 918.5,161.0 919.5,158.2 920.5,155.4 921.5,152.6 922.5,149.9 923.5,147.3 924.5,144.7 925.5,142.1 926.5,139.7 927.5,137.3 928.5,135.0 929.5,132.9 930.5,130.8 931.5,128.8 932.5,127.0 933.5,125.2 934.5,123.6 935.5,122.1 936.5,120.8 937.5,119.6 938.5,118.5 939.5,117.6 940.5,116.8 941.5,116.2 942.5,115.7 943.5,115.4 944.5,115.2 945.5,115.2 946.5,115.4 947.5,115.6 948.5,116.1 949.5,116.7 950.5,117.4 951.5,118.3 952.5,119.4 953.5,120.6 954.5,121.9 955.5,123.3 956.5,124.9 957.5,126.6 958.5,128.5 959.5,130.4 960.5,132.5 961.5,134.6 962.5,136.9 963.5,139.2 964.5,141.7 965.5,144.2 966.5,146.8 967.5,149.4 968.5,152.1 969.5,154.9 970.5,157.7 971.5,160.5 972.5,163.3 973.5,166.2 974.5,169.0 975.5,171.9 976.5,174.8 977.5,177.6 978.5,180.4 979.5,183.2 980.5,185.9 981.5,188.6 982.5,191.2 983.5,193.8 984.5,196.3 985.5,198.7 986.5,201.0 987.5,203.2 988.5,205.3 989.5,207.4 990.5,209.3 991.5,211.0 992.5,212.7 993.5,214.2 994.5,215.6 995.5,216.9 996.5,218.0 997.5,219.0 998.5,219.9 999.5,220.6 1000.5,221.1 1001.5,221.5 1002.5,221.7 1003.5,221.8 1004.5,221.7 1005.5,221.5 1006.5,221.1 1007.5,220.6 1008.5,219.9 1009.5,219.1 1010.5,218.1 1011.5,217.0 1012.5,215.7 1013.5,214.3 1014.5,212.8 1015.5,211.1 1016.5,209.3 1017.5,207.4 1018.5,205.4 1019.5,203.3 1020.5,201.1 1021.5,198.8 1022.5,196.4" fill="none" stroke="#B01818" stroke-width="1.05"/>
<polyline points="566.5,163.1 567.5,155.5 568.5,148.3 569.5,141.5 570.5,135.5 571.5,130.3 572.5,126.1 573.5,123.1 574.5,121.2 575.5,120.5 576.5,121.1 577.5,122.9 578.5,125.9 579.5,130.0 580.5,135.1 581.5,141.0 582.5,147.7 583.5,154.9 584.5,162.5 585.5,170.2 586.5,177.9 587.5,185.3 588.5,192.3 589.5,198.7 590.5,204.3 591.5,209.0 592.5,212.6 593.5,215.1 594.5,216.3 595.5,216.4 596.5,215.1 597.5,212.7 598.5,209.1 599.5,204.5 600.5,198.9 601.5,192.5 602.5,185.6 603.5,178.1 604.5,170.5 605.5,162.7 606.5,155.2 607.5,147.9 608.5,141.2 609.5,135.2 610.5,130.1 611.5,126.0 612.5,123.0 613.5,121.1 614.5,120.5 615.5,121.1 616.5,123.0 617.5,126.0 618.5,130.2 619.5,135.3 620.5,141.3 621.5,148.0 622.5,155.3 623.5,162.9 624.5,170.6 625.5,178.3 626.5,185.7 627.5,192.7 628.5,199.0 629.5,204.6 630.5,209.2 631.5,212.7 632.5,215.2 633.5,216.4 634.5,216.3 635.5,215.0 636.5,212.6 637.5,208.9 638.5,204.2 639.5,198.6 640.5,192.2 641.5,185.2 642.5,177.8 643.5,170.1 644.5,162.4 645.5,154.8 646.5,147.6 647.5,140.9 648.5,135.0 649.5,129.9 650.5,125.8 651.5,122.8 652.5,121.1 653.5,120.5 654.5,121.2 655.5,123.1 656.5,126.2 657.5,130.4 658.5,135.6 659.5,141.6 660.5,148.4 661.5,155.6 662.5,163.2 663.5,171.0 664.5,178.6 665.5,186.0 666.5,193.0 667.5,199.3 668.5,204.8 669.5,209.4 670.5,212.9 671.5,215.2 672.5,216.4 673.5,216.3 674.5,215.0 675.5,212.4 676.5,208.7 677.5,204.0 678.5,198.3 679.5,191.9 680.5,184.9 681.5,177.4 682.5,169.7 683.5,162.0 684.5,154.5 685.5,147.3 686.5,140.6 687.5,134.7 688.5,129.7 689.5,125.7 690.5,122.7 691.5,121.0 692.5,120.5 693.5,121.3 694.5,123.2 695.5,126.4 696.5,130.6 697.5,135.9 698.5,141.9 699.5,148.7 700.5,156.0 701.5,163.6 702.5,171.3 703.5,179.0 704.5,186.4 705.5,193.3 706.5,199.6 707.5,205.0 708.5,209.6 709.5,213.0 710.5,215.3 711.5,216.4 712.5,216.3 713.5,214.9 714.5,212.3 715.5,208.5 716.5,203.8 717.5,198.1 718.5,191.6 719.5,184.5 720.5,177.1 721.5,169.4 722.5,161.7 723.5,154.1 724.5,146.9 725.5,140.3 726.5,134.5 727.5,129.5 728.5,125.5 729.5,122.6 730.5,121.0 731.5,120.5 732.5,121.3 733.5,123.4 734.5,126.6 735.5,130.9 736.5,136.1 737.5,142.2 738.5,149.0 739.5,156.3 740.5,163.9 741.5,171.7 742.5,179.3 743.5,186.7 744.5,193.6 745.5,199.8 746.5,205.3 747.5,209.7 748.5,213.2 749.5,215.4 750.5,216.4 751.5,216.2 752.5,214.8 753.5,212.1 754.5,208.3 755.5,203.5 756.5,197.8 757.5,191.3 758.5,184.2 759.5,176.7 760.5,169.0 761.5,161.3 762.5,153.8 763.5,146.6 764.5,140.0 765.5,134.2 766.5,129.3 767.5,125.3 768.5,122.5 769.5,120.9 770.5,120.5 771.5,121.4 772.5,123.5 773.5,126.7 774.5,131.1 775.5,136.4 776.5,142.5 777.5,149.4 778.5,156.7 779.5,164.3 780.5,172.0 781.5,179.7 782.5,187.0 783.5,193.9 784.5,200.1 785.5,205.5 786.5,209.9 787.5,213.3 788.5,215.5 789.5,216.5 790.5,216.2 791.5,214.7 792.5,212.0 793.5,208.1 794.5,203.3 795.5,197.5 796.5,191.0 797.5,183.9 798.5,176.4 799.5,168.7 800.5,160.9 801.5,153.4 802.5,146.3 803.5,139.8 804.5,134.0 805.5,129.1 806.5,125.2 807.5,122.4 808.5,120.9 809.5,120.5 810.5,121.5 811.5,123.6 812.5,126.9 813.5,131.3 814.5,136.7 815.5,142.8 816.5,149.7 817.5,157.0 818.5,164.7 819.5,172.4 820.5,180.0 821.5,187.4 822.5,194.2 823.5,200.4 824.5,205.7 825.5,210.1 826.5,213.4 827.5,215.6 828.5,216.5 829.5,216.1 830.5,214.6 831.5,211.8 832.5,207.9 833.5,203.0 834.5,197.2 835.5,190.6 836.5,183.5 837.5,176.0 838.5,168.3 839.5,160.6 840.5,153.1 841.5,146.0 842.5,139.5 843.5,133.7 844.5,128.8 845.5,125.0 846.5,122.3 847.5,120.8 848.5,120.6 849.5,121.5 850.5,123.7 851.5,127.1 852.5,131.5 853.5,136.9 854.5,143.1 855.5,150.0 856.5,157.4 857.5,165.0 858.5,172.8 859.5,180.4 860.5,187.7 861.5,194.5 862.5,200.6 863.5,206.0 864.5,210.3 865.5,213.5 866.5,215.6 867.5,216.5 868.5,216.1 869.5,214.5 870.5,211.6 871.5,207.7 872.5,202.8 873.5,196.9 874.5,190.3 875.5,183.2 876.5,175.6 877.5,167.9 878.5,160.2 879.5,152.7 880.5,145.7 881.5,139.2 882.5,133.5 883.5,128.6 884.5,124.9 885.5,122.2 886.5,120.8 887.5,120.6 888.5,121.6 889.5,123.9 890.5,127.3 891.5,131.8 892.5,137.2 893.5,143.5 894.5,150.4 895.5,157.7 896.5,165.4 897.5,173.1 898.5,180.7 899.5,188.0 900.5,194.8 901.5,200.9 902.5,206.2 903.5,210.5 904.5,213.7 905.5,215.7 906.5,216.5 907.5,216.0 908.5,214.4 909.5,211.5 910.5,207.5 911.5,202.5 912.5,196.6 913.5,190.0 914.5,182.8 915.5,175.3 916.5,167.6 917.5,159.9 918.5,152.4 919.5,145.4 920.5,138.9 921.5,133.2 922.5,128.4 923.5,124.7 924.5,122.1 925.5,120.7 926.5,120.6 927.5,121.7 928.5,124.0 929.5,127.5 930.5,132.0 931.5,137.5 932.5,143.8 933.5,150.7 934.5,158.1 935.5,165.7 936.5,173.5 937.5,181.1 938.5,188.4 939.5,195.1 940.5,201.2 941.5,206.4 942.5,210.6 943.5,213.8 944.5,215.8 945.5,216.5 946.5,216.0 947.5,214.3 948.5,211.3 949.5,207.3 950.5,202.2 951.5,196.3 952.5,189.7 953.5,182.5 954.5,174.9 955.5,167.2 956.5,159.5 957.5,152.1 958.5,145.0 959.5,138.6 960.5,133.0 961.5,128.2 962.5,124.6 963.5,122.0 964.5,120.7 965.5,120.6 966.5,121.8 967.5,124.1 968.5,127.7 969.5,132.2 970.5,137.8 971.5,144.1 972.5,151.0 973.5,158.4 974.5,166.1 975.5,173.8 976.5,181.4 977.5,188.7 978.5,195.4 979.5,201.4 980.5,206.6 981.5,210.8 982.5,213.9 983.5,215.8 984.5,216.5 985.5,215.9 986.5,214.1 987.5,211.2 988.5,207.1 989.5,202.0 990.5,196.0 991.5,189.4 992.5,182.1 993.5,174.6 994.5,166.8 995.5,159.2 996.5,151.7 997.5,144.7 998.5,138.3 999.5,132.7 1000.5,128.1 1001.5,124.4 1002.5,121.9 1003.5,120.7 1004.5,120.6 1005.5,121.9 1006.5,124.3 1007.5,127.8 1008.5,132.5 1009.5,138.0 1010.5,144.4 1011.5,151.4 1012.5,158.8 1013.5,166.5 1014.5,174.2 1015.5,181.8 1016.5,189.0 1017.5,195.7 1018.5,201.7 1019.5,206.8 1020.5,211.0 1021.5,214.0 1022.5,215.9" fill="none" stroke="#38209C" stroke-width="1.05"/>
<rect x="566" y="54" width="1" height="230" fill="#C030C0"/>
<rect x="565" y="150" width="2" height="14" fill="#5030D0" opacity=".7"/>
<circle cx="566.5" cy="165" r="2.6" fill="none" stroke="#30A040" stroke-width="1"/>
<path d="M557.5 45.2H575.5L574 47.8H559z" fill="#D02010"/><path d="M559.5 47.6H573.5L566.5 54z" fill="#30C030"/><text x="564.5" y="52.5" font-size="6" font-weight="bold" fill="#fff" font-family="Liberation Sans, sans-serif">1</text>
</svg>
<div class="a" style="left:556px;top:295px;width:470px;height:13px;background:#F3F2EC;border-top:1px solid #E8E6DA"></div>
<div class="a" style="left:556px;top:295px;width:14px;height:13px;border:1px solid #B5C7EE;border-radius:2px;background:linear-gradient(#D3E0FB,#BACDF6)"></div>
<svg width="14" height="13" style="left:556px;top:295px"><path d="M9 2.5l-4.5 4l4.5 4z" fill="#4D6185"/></svg>
<div class="a" style="left:1006px;top:296px;width:30px;height:12px;border:1px solid #B5C7EE;border-radius:2px;background:linear-gradient(#CBDBFA,#BACDF6)"></div>
<div class="a" style="left:555px;top:311px;width:59px;height:60px;border:1px solid #fff;border-top-color:#ACA899;border-left-color:#ACA899"></div>
<div class="t" style="left:561px;top:321px;color:#222">T1</div>
<div class="t" style="left:561px;top:336px;color:#222">T2</div>
<div class="t" style="left:561px;top:355px;color:#222">T2-T1</div>
<div class="a" style="left:580px;top:317px;width:15px;height:17px;background:#EFEDE0;border:1px solid #8E8B7C;border-top-color:#fff;border-left-color:#fff;box-shadow:inset -1px -1px 0 #C8C5B5"></div>
<svg width="16" height="17" style="left:580px;top:317px"><path d="M2.5 8l5 -4.5v3h5v3h-5v3z" fill="#000"/></svg>
<div class="a" style="left:597px;top:317px;width:15px;height:17px;background:#EFEDE0;border:1px solid #8E8B7C;border-top-color:#fff;border-left-color:#fff;box-shadow:inset -1px -1px 0 #C8C5B5"></div>
<svg width="16" height="17" style="left:597px;top:317px"><path d="M12.5 8l-5 -4.5v3h-5v3h5v3z" fill="#000"/></svg>
<div class="a" style="left:580px;top:335px;width:15px;height:17px;background:#EFEDE0;border:1px solid #8E8B7C;border-top-color:#fff;border-left-color:#fff;box-shadow:inset -1px -1px 0 #C8C5B5"></div>
<svg width="16" height="17" style="left:580px;top:335px"><path d="M2.5 8l5 -4.5v3h5v3h-5v3z" fill="#000"/></svg>
<div class="a" style="left:597px;top:335px;width:15px;height:17px;background:#EFEDE0;border:1px solid #8E8B7C;border-top-color:#fff;border-left-color:#fff;box-shadow:inset -1px -1px 0 #C8C5B5"></div>
<svg width="16" height="17" style="left:597px;top:335px"><path d="M12.5 8l-5 -4.5v3h-5v3h5v3z" fill="#000"/></svg>
<div class="a" style="left:616px;top:312px;width:398px;height:59px;background:#fff;border:1px solid #fff;border-top-color:#716F64;border-left-color:#716F64;box-shadow:-1px -1px 0 #ACA899"></div>
<div class="t cj" style="left:602px;top:314px;width:100px;text-align:center">时间</div>
<div class="t" style="left:602px;top:328px;width:100px;text-align:center;color:#222">16.010 ms</div>
<div class="t" style="left:602px;top:341px;width:100px;text-align:center;color:#222">16.010 ms</div>
<div class="t" style="left:602px;top:354px;width:100px;text-align:center;color:#222">0.000 s</div>
<div class="t cj" style="left:683px;top:314px;width:100px;text-align:center">通道_A</div>
<div class="t" style="left:683px;top:328px;width:100px;text-align:center;color:#222">9.102 mV</div>
<div class="t" style="left:683px;top:341px;width:100px;text-align:center;color:#222">9.102 mV</div>
<div class="t" style="left:683px;top:354px;width:100px;text-align:center;color:#222">0.000 V</div>
<div class="t cj" style="left:762px;top:314px;width:100px;text-align:center">通道_B</div>
<div class="t" style="left:762px;top:328px;width:100px;text-align:center;color:#222">5.394 mV</div>
<div class="t" style="left:762px;top:341px;width:100px;text-align:center;color:#222">5.394 mV</div>
<div class="t" style="left:762px;top:354px;width:100px;text-align:center;color:#222">0.000 V</div>
<div class="a" style="left:1020px;top:322px;width:3px;height:16px;background:#1a1a30"></div>
<div class="a" style="left:1020px;top:344px;width:3px;height:18px;background:#1a1a30"></div>
<div class="grp" style="left:555px;top:384px;width:149px;height:72px"></div>
<div class="t cj blue" style="left:562px;top:378px;background:#ECE9D8;padding:0 2px">时基</div>
<div class="grp" style="left:705px;top:384px;width:147px;height:72px"></div>
<div class="t cj blue" style="left:712px;top:378px;background:#ECE9D8;padding:0 2px">通道 <span style="font-size:11px">A</span></div>
<div class="grp" style="left:853px;top:384px;width:147px;height:72px"></div>
<div class="t cj blue" style="left:859px;top:378px;background:#ECE9D8;padding:0 2px">通道 <span style="font-size:11px">B</span></div>
<div class="grp" style="left:1002px;top:384px;width:40px;height:72px"></div>
<div class="t cj blue" style="left:1007px;top:378px;background:#ECE9D8;padding:0 2px">触发</div>
<div class="t cj" style="left:557px;top:396px">标度:</div>
<div class="inp" style="left:604px;top:390px;width:95px;height:20px"></div><div class="t" style="left:608px;top:395px;color:#222">500 us/Div</div>
<div class="t cj" style="left:557px;top:416px"><span style="font-size:11px;color:#444">X</span> 轴位移<span style="letter-spacing:1.2px">(格)</span><span style="margin-left:2px">:</span></div>
<div class="inp" style="left:639px;top:411px;width:60px;height:20px"></div><div class="t" style="left:643px;top:416px;color:#222">0</div>
<div class="btn on" style="left:563px;top:435px;width:28px;height:18px;line-height:16px"><span style="color:#666">Y/T</span></div>
<div class="btn cj" style="left:593px;top:435px;width:36px;height:18px;line-height:18px">添加</div>
<div class="btn" style="left:632px;top:435px;width:30px;height:18px;line-height:16px">B/A</div>
<div class="btn" style="left:664px;top:435px;width:29px;height:18px;line-height:16px">A/B</div>
<div class="t cj" style="left:708px;top:396px">刻度<span style="margin-left:4px">:</span></div>
<div class="inp" style="left:757px;top:390px;width:92px;height:20px"></div><div class="t" style="left:762px;top:395px;color:#222">100 mV/Div</div>
<div class="t cj" style="left:708px;top:416px"><span style="font-size:11px;color:#444">Y</span> 轴位移<span style="letter-spacing:1.2px">(格)</span><span style="margin-left:2px">:</span></div>
<div class="inp" style="left:789px;top:411px;width:60px;height:20px"></div><div class="t" style="left:793px;top:416px;color:#222">0</div>
<div class="btn on cj" style="left:709px;top:435px;width:34px;height:18px;line-height:18px">交流</div>
<div class="btn" style="left:746px;top:435px;width:23px;height:18px;line-height:16px">0</div>
<div class="btn cj" style="left:772px;top:435px;width:34px;height:18px;line-height:18px">直流</div>
<div class="t cj" style="left:854px;top:396px">刻度<span style="margin-left:4px">:</span></div>
<div class="inp" style="left:906px;top:390px;width:91px;height:20px"></div><div class="t" style="left:911px;top:395px;color:#222">20 mV/Div</div>
<div class="t cj" style="left:854px;top:416px"><span style="font-size:11px;color:#444">Y</span> 轴位移<span style="letter-spacing:1.2px">(格)</span><span style="margin-left:2px">:</span></div>
<div class="inp" style="left:936px;top:411px;width:61px;height:20px"></div><div class="t" style="left:940px;top:416px;color:#222">0</div>
<div class="btn on cj" style="left:857px;top:435px;width:33px;height:18px;line-height:18px">交流</div>
<div class="btn" style="left:893px;top:435px;width:20px;height:18px;line-height:16px">0</div>
<div class="btn cj" style="left:916px;top:435px;width:34px;height:18px;line-height:18px">直流</div>
<div class="btn" style="left:953px;top:435px;width:18px;height:18px;line-height:16px">-</div>
<div class="a" style="left:832px;top:437px;width:11px;height:11px;border-radius:50%;border:1px solid #CBC8B8;background:#F3F2EB"></div>
<div class="a" style="left:835px;top:440px;width:5px;height:5px;border-radius:50%;background:#C9C7BA"></div>
<div class="a" style="left:985px;top:437px;width:11px;height:11px;border-radius:50%;border:1px solid #CBC8B8;background:#F3F2EB"></div>
<div class="a" style="left:988px;top:440px;width:5px;height:5px;border-radius:50%;background:#C9C7BA"></div>
<div class="t cj" style="left:1005px;top:396px">边沿</div>
<div class="t cj" style="left:1005px;top:416px">水平</div>
<div class="btn cj" style="left:1006px;top:435px;width:30px;height:18px;line-height:18px">单</div>
<div class="a" style="left:551px;top:457px;width:480px;height:4px;background:#7A86D2"></div>
<!-- sec_wm -->
<svg width="1022" height="509" viewBox="0 0 1022 509" style="left:0;top:0">
<rect x="1014" y="461" width="8" height="48" fill="#ECE9D8"/><rect x="992" y="483" width="6" height="26" fill="#F3F2EC"/><rect x="998" y="483" width="1" height="26" fill="#8a8a8a"/><rect x="999" y="483" width="15" height="26" fill="#F4F3EC"/>
<text x="855" y="476.5" font-size="31.5" font-weight="900" font-family="Noto Sans CJK SC, sans-serif" fill="#15427F" stroke="#fff" stroke-width="3" paint-order="stroke" textLength="159" lengthAdjust="spacingAndGlyphs">矿石收音机</text>
<text x="857" y="502" font-size="17" font-weight="bold" font-family="Liberation Sans, sans-serif" fill="#15427F" stroke="#fff" stroke-width="2.4" paint-order="stroke" textLength="158" lengthAdjust="spacingAndGlyphs">www.crystalradio.cn</text>
<rect x="1003" y="482.5" width="14" height="10.5" fill="#1a1a1a"/><path d="M1008 485l7 6M1009 484.5l7 5" stroke="#E8DC40" stroke-width="1.6"/><path d="M1005 488h5" stroke="#ddd" stroke-width="1"/><path d="M1008 502.5l4 2.5l-4 2.5z" fill="#111"/>
</svg>
</body></html>
